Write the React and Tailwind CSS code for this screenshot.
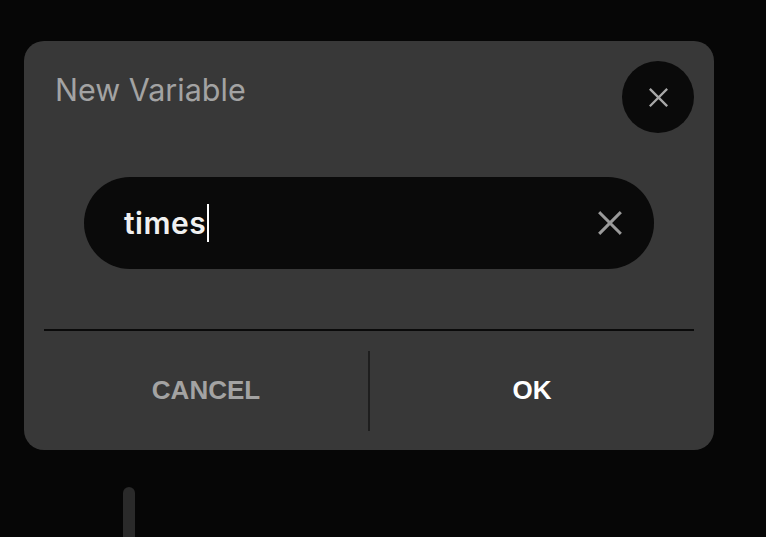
import { useState } from 'react';

function XIcon({ className, strokeWidth = 2 }) {
  return (
    <svg viewBox="0 0 24 24" className={className} fill="none" stroke="currentColor" strokeWidth={strokeWidth} strokeLinecap="square">
      <path d="M3 3 L21 21 M21 3 L3 21" />
    </svg>
  );
}

export default function App() {
  const [name, setName] = useState('times');

  return (
    <div className="relative w-full h-[537px] bg-[#060606] overflow-hidden pl-6 pt-[41px]" style={{ fontFamily: 'Inter, "Noto Sans", sans-serif' }}>
      {/* faint scroll handle behind the dialog */}
      <div className="absolute left-[123px] top-[487px] w-[12px] h-[80px] rounded-full bg-[#2a2a2a]" />

      <div className="relative w-[690px] h-[409px] rounded-[20px] bg-[#383838] px-5 flex flex-col">
        {/* Header */}
        <div className="flex items-start justify-between pt-5">
          <h2 className="pl-[11px] pt-[9px] text-[30.5px] leading-[40px] font-normal text-[#a3a3a3]">New Variable</h2>
          <button className="w-[72px] h-[72px] rounded-full bg-[#0a0a0a] flex items-center justify-center text-[#a8a8a8]">
            <XIcon className="w-[21px] h-[21px]" strokeWidth={2.6} />
          </button>
        </div>

        {/* Input */}
        <div className="mx-10 mt-[44px] h-[92px] rounded-full bg-[#0a0a0a] flex items-center pl-10 pr-[31px]">
          <div className="flex-1 flex items-center">
            <span className="text-[30px] font-semibold text-[#f0f0f0] tracking-[0.5px] leading-none">{name}</span>
            <span className="ml-[1px] w-[2px] h-[38px] bg-white" />
          </div>
          <button onClick={() => setName('')} className="w-[26px] h-[26px] text-[#9a9a9a]">
            <XIcon className="w-[26px] h-[26px]" strokeWidth={2.8} />
          </button>
        </div>

        {/* Footer */}
        <div className="mt-[60px] h-[2px] bg-[#0a0a0a]" />
        <div className="flex-1 flex items-center" style={{ fontFamily: '"Liberation Sans", Arial, sans-serif' }}>
          <button className="flex-1 h-full flex items-center justify-center text-[26px] font-bold text-[#a3a3a3]">CANCEL</button>
          <div className="w-[2px] h-[80px] bg-[#1e1e1e]" />
          <button className="flex-1 h-full flex items-center justify-center text-[26px] font-bold text-white">OK</button>
        </div>
      </div>
    </div>
  );
}
